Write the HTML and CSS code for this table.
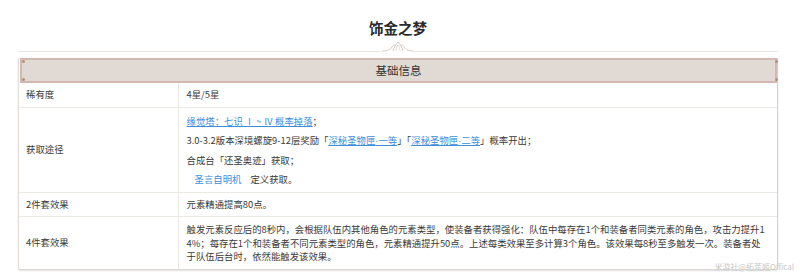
FILE: index.html
```html
<!DOCTYPE html>
<html lang="zh">
<head>
<meta charset="utf-8">
<link rel="stylesheet" href="styles.css">
</head>
<body>
<div class="page">
  <h1 class="title">饰金之梦</h1>
  <div class="divider">
    <svg class="orn" width="34" height="11" viewBox="0 0 34 11">
      <path d="M1 10 C6 10 9 9 11 6 C12 4 14 3 15 5" fill="none" stroke="#d9cfc6" stroke-width="1"/>
      <path d="M33 10 C28 10 25 9 23 6 C22 4 20 3 19 5" fill="none" stroke="#d9cfc6" stroke-width="1"/>
      <path d="M12 10 C13 6 15 3 17 1 C19 3 21 6 22 10" fill="none" stroke="#d4c8be" stroke-width="1"/>
      <path d="M15 10 C15 7 16 5 17 4 C18 5 19 7 19 10" fill="none" stroke="#dcd2c9" stroke-width="0.8"/>
    </svg>
  </div>
  <div class="panel">
    <div class="head">基础信息</div>
    <table class="info">
      <tr>
        <td class="k">稀有度</td>
        <td class="v">4星/5星</td>
      </tr>
      <tr>
        <td class="k">获取途径</td>
        <td class="v multi">
          <p><a class="lnk">缘觉塔：七识 Ⅰ ~ Ⅳ 概率掉落</a>；</p>
          <p>3.0-3.2版本深境螺旋9-12层奖励「<a class="lnk">深秘圣物匣<span class="dot">·</span>一等</a>」「<a class="lnk">深秘圣物匣<span class="dot">·</span>二等</a>」概率开出；</p>
          <p>合成台「还圣奥迹」获取；</p>
          <p><a class="tag">圣言自明机</a>定义获取。</p>
        </td>
      </tr>
      <tr>
        <td class="k">2件套效果</td>
        <td class="v">元素精通提高80点。</td>
      </tr>
      <tr>
        <td class="k">4件套效果</td>
        <td class="v long">触发元素反应后的8秒内，会根据队伍内其他角色的元素类型，使装备者获得强化：队伍中每存在1个和装备者同类元素的角色，攻击力提升14%；每存在1个和装备者不同元素类型的角色，元素精通提升50点。上述每类效果至多计算3个角色。该效果每8秒至多触发一次。装备者处于队伍后台时，依然能触发该效果。</td>
      </tr>
    </table>
  </div>
  <div class="wm">米游社@拓荒姬Offical</div>
</div>
</body>
</html>
```

FILE: styles.css
```css
* { box-sizing: border-box; }
html, body { margin: 0; padding: 0; background: #fff; }
body {
  font-family: "Noto Sans CJK SC", "Noto Sans", sans-serif;
  color: #3a3a3a;
}
.page {
  position: relative;
  width: 800px;
  height: 278px;
  padding: 0 22px 0 18px;
}
.title {
  margin: 0;
  padding-top: 19px;
  height: 38px;
  font-size: 14.5px;
  line-height: 18px;
  font-weight: bold;
  text-align: center;
  color: #2b2b2b;
}
.divider {
  position: relative;
  height: 14px;
  border-bottom: 1px solid #ebe6e1;
  margin-bottom: 6px;
  display: flex;
  justify-content: center;
  align-items: flex-end;
}
.orn { display: block; margin-bottom: -1px; background: #fff; }
.panel {
  border-left: 1px solid #e2ddd9;
  border-right: 1px solid #d6cfcb;
  border-bottom: 1px solid #ddd6d2;
  box-shadow: 0 1px 2px rgba(0,0,0,0.12);
  border-radius: 0 0 3px 3px;
}
.head {
  position: relative;
  height: 25px;
  margin-left: 1px;
  background: #e1dad4;
  border: 2px solid #d2b8ae;
  text-align: center;
  font-size: 11.5px;
  line-height: 21px;
  color: #333;
}
.head::before {
  content: "";
  position: absolute;
  left: 0;
  top: 0;
  width: 3px;
  height: 3px;
  border-radius: 50%;
  background: #b48f82;
  box-shadow: 753px 0 0 #b48f82, 0 18px 0 #b48f82, 753px 18px 0 #b48f82;
}
.info {
  width: 100%;
  border-collapse: collapse;
  font-size: 9.4px;
  line-height: 13.5px;
}
.info td {
  border-top: 1px solid #ece8e4;
  vertical-align: middle;
}
.info tr:first-child td { border-top: none; }
.k {
  width: 159px;
  padding: 5px 7px;
  border-right: 1px solid #ece8e4;
  height: 24px;
}
.v { padding: 5px 6px 5px 8px; height: 24px; }
.multi { padding: 6px 6px 6px 8px; }
.multi p { margin: 0 0 5px; line-height: 14px; }
.multi p:last-child { margin-bottom: 0; }
.long { padding: 6px 10px 5px 8px; word-break: break-all; }
.lnk { color: #3d8fdb; text-decoration: underline; }
.dot { font-family: "Liberation Sans", sans-serif; }
.tag { color: #3d8fdb; padding: 0 9px 0 8px; }
.wm {
  position: absolute;
  right: 6px;
  top: 261px;
  font-size: 8px;
  color: #c9c9c9;
}
```
